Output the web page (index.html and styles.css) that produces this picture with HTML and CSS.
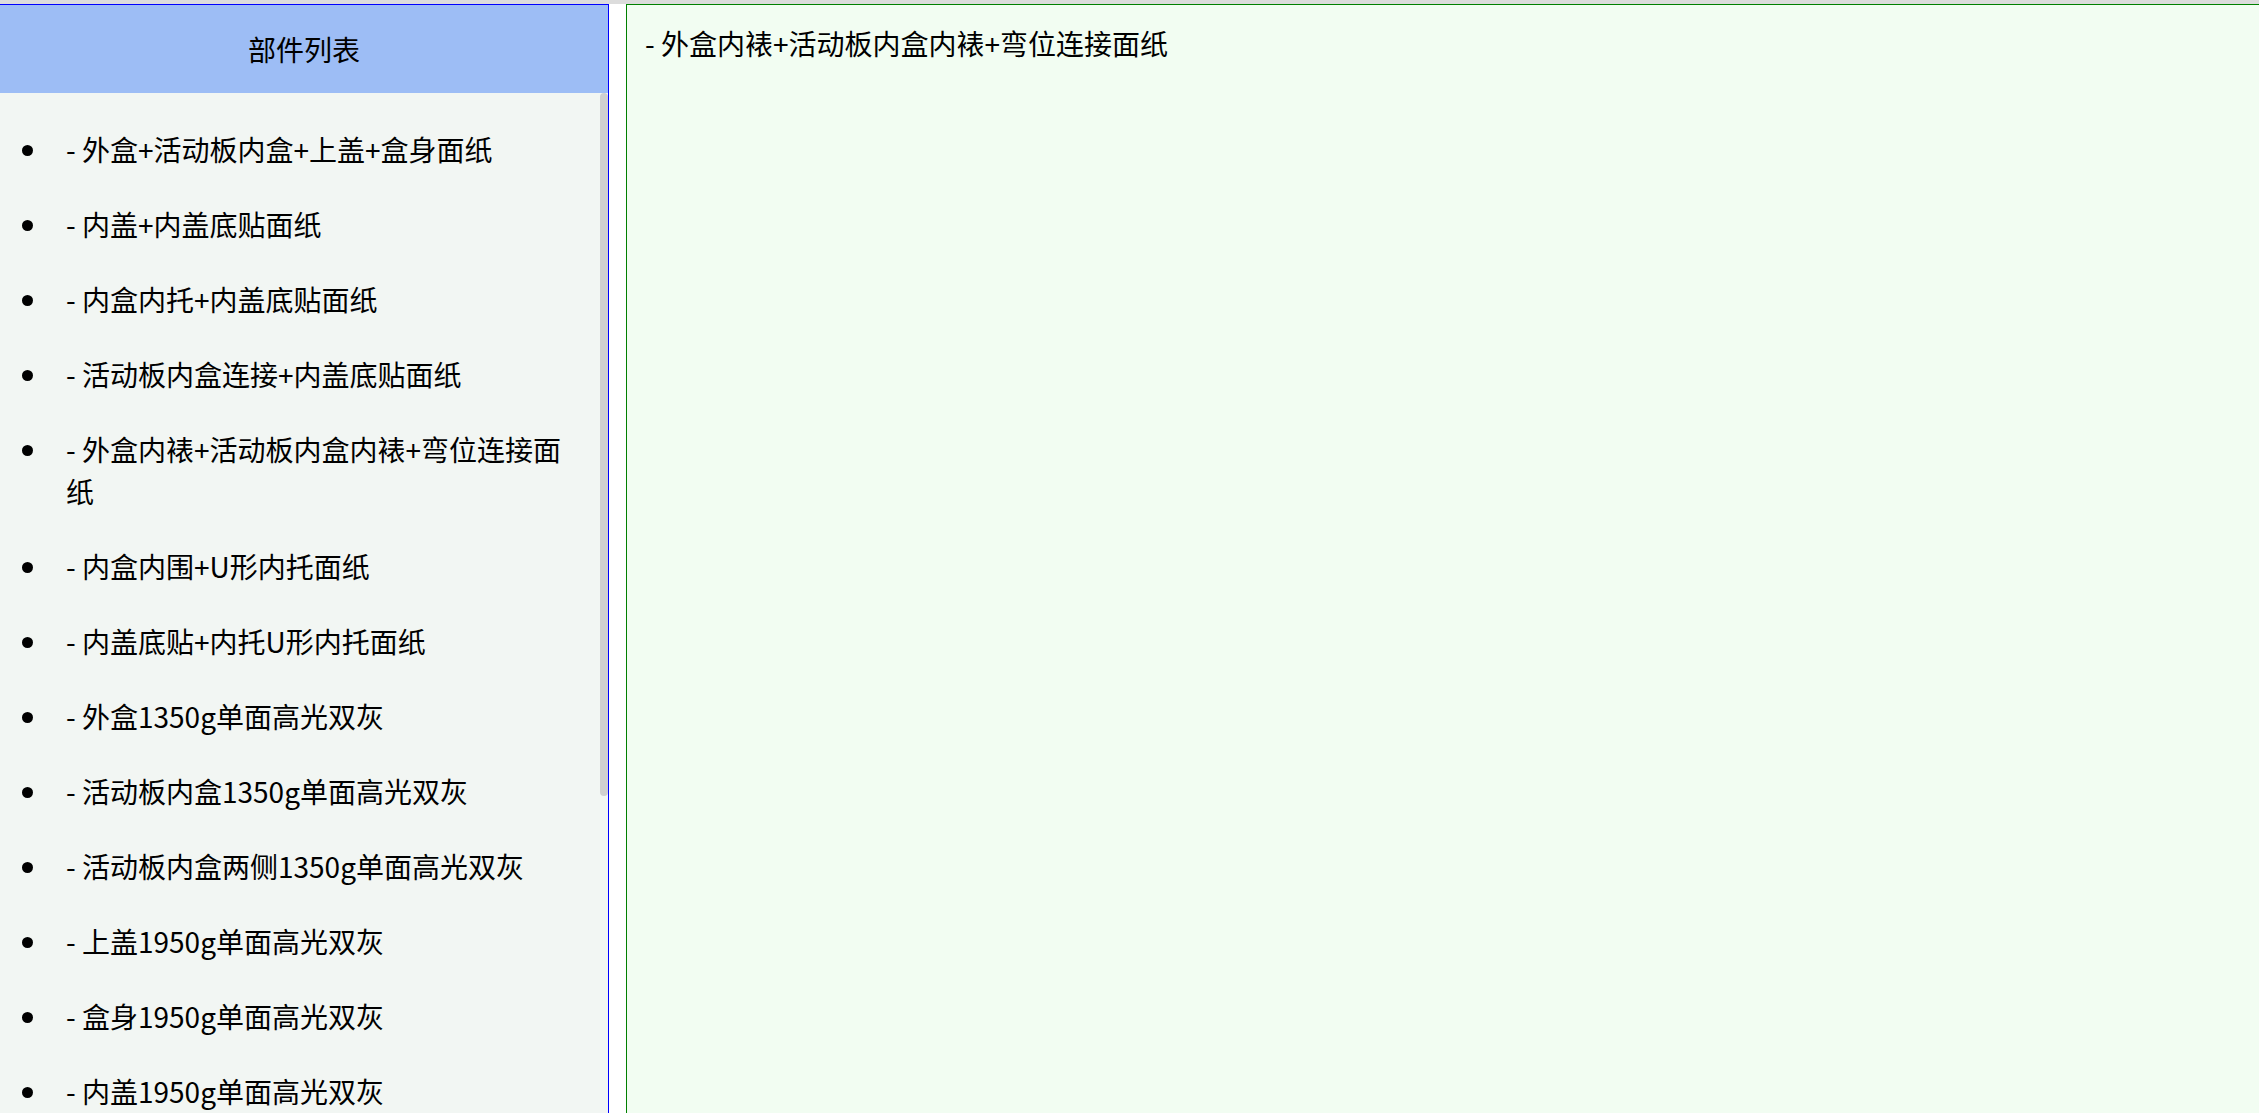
FILE: index.html
```html
<!DOCTYPE html>
<html lang="zh-CN">
<head>
    <meta charset="UTF-8">
    <meta name="viewport" content="width=device-width, initial-scale=1.0">
    <title>部件列表</title>
    <link rel="stylesheet" href="styles.css">
</head>
<body>
    <div class="topbar"></div>
    <div class="main">
        <aside class="parts">
            <div class="parts-title">部件列表</div>
            <ul class="parts-list">
                <li>- 外盒+活动板内盒+上盖+盒身面纸</li>
                <li>- 内盖+内盖底贴面纸</li>
                <li>- 内盒内托+内盖底贴面纸</li>
                <li>- 活动板内盒连接+内盖底贴面纸</li>
                <li>- 外盒内裱+活动板内盒内裱+弯位连接面纸</li>
                <li>- 内盒内围+U形内托面纸</li>
                <li>- 内盖底贴+内托U形内托面纸</li>
                <li>- 外盒1350g单面高光双灰</li>
                <li>- 活动板内盒1350g单面高光双灰</li>
                <li>- 活动板内盒两侧1350g单面高光双灰</li>
                <li>- 上盖1950g单面高光双灰</li>
                <li>- 盒身1950g单面高光双灰</li>
                <li>- 内盖1950g单面高光双灰</li>
                <li>- 内盒内托1350g单面高光双灰</li>
                <li>- 内盒内围1350g单面高光双灰</li>
                <li>- U形内托1350g单面高光双灰</li>
                <li>- 弯位连接1350g单面高光双灰</li>
                <li>- 内盖底贴1350g单面高光双灰</li>
                <li>- 活动板内盒连接1350g单面高光双灰</li>
            </ul>
            <div class="scroll-thumb"></div>
        </aside>
        <section class="detail">
            - 外盒内裱+活动板内盒内裱+弯位连接面纸
        </section>
    </div>
</body>
</html>
```

FILE: styles.css
```css
body {
    margin: 0;
    font-family: "Noto Sans CJK SC", "Noto Sans", sans-serif;
    font-size: 28px;
    line-height: 1.5;
    color: #000;
    background-color: #fff;
    overflow: hidden;
}
.topbar {
    height: 4px;
    background-color: #dcdcdc;
}
.main {
    display: flex;
    gap: 17px;
    height: calc(100vh + 16px);
}
.parts {
    position: relative;
    width: 608px;
    flex-shrink: 0;
    display: flex;
    flex-direction: column;
    border-top: 1px solid #0000ff;
    border-right: 1px solid #0000ff;
    background-color: #f2f6f3;
    min-height: 0;
}
.parts-title {
    height: 88px;
    flex-shrink: 0;
    display: flex;
    align-items: center;
    justify-content: center;
    background-color: #9dbdf5;
}
.parts-list {
    flex: 1;
    min-height: 0;
    overflow: hidden;
    margin: 0;
    padding: 19px 28px 52px 66px;
    list-style: none;
}
.parts-list li {
    padding: 16px 0 17px;
}
.parts-list li::before {
    content: "";
    display: inline-block;
    width: 11px;
    height: 11px;
    border-radius: 50%;
    background-color: #000;
    margin-left: -44px;
    margin-right: 33px;
    vertical-align: 5px;
}
.scroll-thumb {
    position: absolute;
    top: 88px;
    right: 0;
    width: 8px;
    height: 703px;
    border-radius: 4px;
    background-color: #d0d0d0;
}
.detail {
    flex: 1;
    border-top: 1px solid #008000;
    border-left: 1px solid #008000;
    background-color: #f2fdf2;
    padding: 17px 18px;
}
```
